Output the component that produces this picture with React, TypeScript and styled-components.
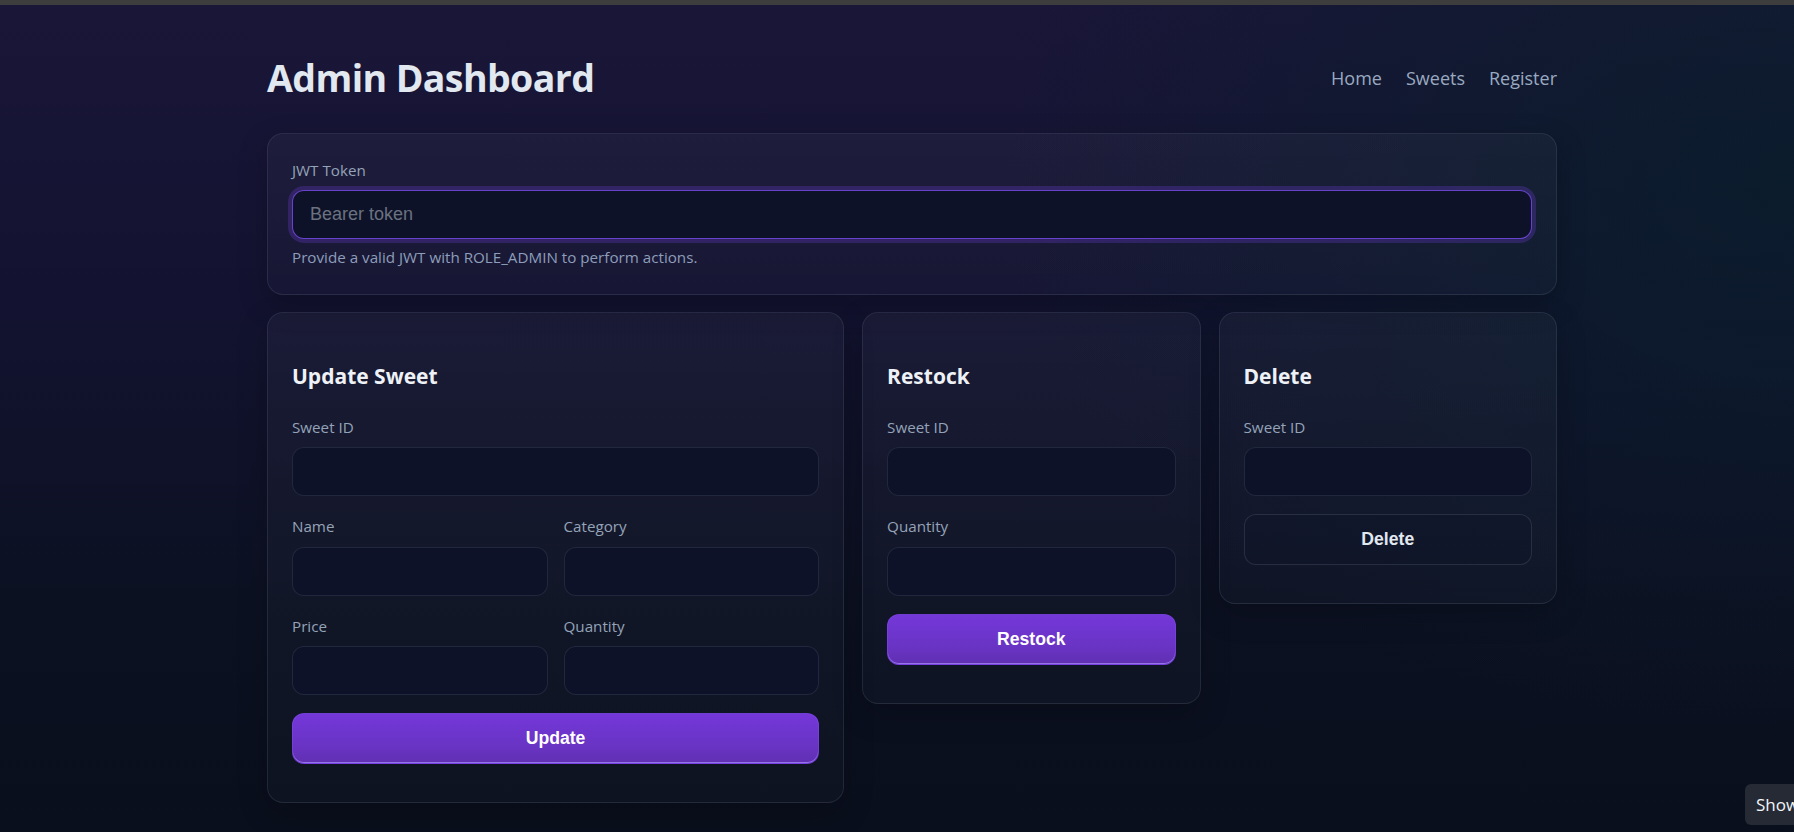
import React from 'react';
import styled, { createGlobalStyle } from 'styled-components';

const GlobalStyle = createGlobalStyle`
    html, body {
        margin: 0;
        padding: 0;
    }
    body {
        min-height: 100vh;
        overflow-x: hidden;
        font-family: "Open Sans", "Noto Sans", sans-serif;
        color: #e2e8f0;
        background:
            radial-gradient(1100px 760px at 100% 22%, rgba(8, 30, 42, 0.78), transparent 72%),
            linear-gradient(180deg, #1a1638 0%, #131331 35%, #0c1122 72%, #0a0f1d 100%);
        background-attachment: fixed;
    }
    * { box-sizing: border-box; }
`;

const TopStrip = styled.div`
    height: 5px;
    background: #3d3d3d;
`;

const Page = styled.div`
    padding: 0 0 24px 30px;
`;

const Container = styled.div`
    max-width: 1290px;
    margin: 0 auto;
    display: flex;
    flex-direction: column;
    gap: 17px;
`;

const Header = styled.header`
    display: flex;
    align-items: center;
    justify-content: space-between;
    padding: 50px 0 15px;
`;

const Title = styled.h1`
    margin: 0;
    font-size: 37.5px;
    line-height: 1.23;
    letter-spacing: -0.6px;
    font-weight: 700;
    color: #e2e8f0;
`;

const Nav = styled.nav`
    display: flex;
    gap: 24px;
    a {
        color: #9aa9c0;
        text-decoration: none;
        font-size: 18px;
        line-height: 1.5;
    }
`;

const Panel = styled.section`
    border: 1px solid rgba(148, 163, 184, 0.14);
    border-radius: 16px;
    padding: 24px;
    background: linear-gradient(180deg, rgba(255, 255, 255, 0.035), rgba(255, 255, 255, 0.018));
    box-shadow: 0 10px 30px rgba(0, 0, 0, 0.22);
`;

const Label = styled.label`
    display: block;
    font-size: 15.2px;
    line-height: 1.6;
    color: #94a3b8;
    margin-bottom: 8px;
`;

const Input = styled.input<{ $active?: boolean }>`
    display: block;
    width: 100%;
    padding: 13px 17px;
    font-family: "Liberation Sans", Arial, sans-serif;
    font-size: 18px;
    color: #e2e8f0;
    caret-color: #cbd5e1;
    background: #0e1228;
    border: 1px solid ${p => p.$active ? 'rgba(118, 76, 230, 0.85)' : 'rgba(148, 163, 184, 0.15)'};
    border-radius: 12px;
    outline: none;
    box-shadow: ${p => p.$active ? '0 0 0 4px rgba(110, 60, 220, 0.28)' : 'none'};
    &::placeholder {
        color: #6b7280;
    }
`;

const Hint = styled.p`
    margin: 6px 0 0;
    font-size: 15.2px;
    line-height: 1.6;
    color: #8d9dba;
`;

const Grid = styled.div`
    display: grid;
    grid-template-columns: 1.705fr 1fr 1fr;
    gap: 18px;
    align-items: start;
`;

const CardTitle = styled.h2`
    margin: 26px 0 25px;
    font-size: 21px;
    line-height: 1.3;
    font-weight: 700;
    color: #eef2f7;
`;

const Form = styled.div`
    display: flex;
    flex-direction: column;
    gap: 18px;
    margin-bottom: 14px;
`;

const Row = styled.div`
    display: grid;
    grid-template-columns: 1fr 1fr;
    gap: 16px;
`;

const Button = styled.button<{ $variant?: 'primary' | 'ghost' }>`
    display: block;
    width: 100%;
    padding: 14px;
    font-family: "Liberation Sans", Arial, sans-serif;
    font-size: 17.6px;
    font-weight: 700;
    border-radius: 12px;
    cursor: pointer;
    color: ${p => p.$variant === 'ghost' ? '#e2e8f0' : '#ffffff'};
    background: ${p => p.$variant === 'ghost'
        ? 'rgba(15, 21, 40, 0.35)'
        : 'linear-gradient(180deg, #7437d9 0%, #6a34c6 60%, #6030b2 100%)'};
    border: 1px solid ${p => p.$variant === 'ghost' ? 'rgba(148, 163, 184, 0.18)' : 'rgba(124, 72, 230, 0.6)'};
    box-shadow: ${p => p.$variant === 'ghost' ? 'none' : 'inset 0 -1px 0 rgba(167, 139, 250, 0.75)'};
`;

const ShowTab = styled.div`
    position: fixed;
    left: 1745px;
    top: 784px;
    height: 41px;
    padding: 0 11px;
    border-radius: 6px 0 0 6px;
    background: #262a35;
    color: #f1f5f9;
    font-size: 17px;
    line-height: 41px;
    white-space: nowrap;
`;

const Field: React.FC<{ label: string }> = ({ label }) => (
    <div>
        <Label>{label}</Label>
        <Input />
    </div>
);

const App: React.FC = () => {
    return <>
        <GlobalStyle />
        <TopStrip />
        <Page>
            <Container>
                <Header>
                    <Title>Admin Dashboard</Title>
                    <Nav>
                        <a href="#">Home</a>
                        <a href="#">Sweets</a>
                        <a href="#">Register</a>
                    </Nav>
                </Header>

                <Panel>
                    <Label>JWT Token</Label>
                    <Input $active autoFocus placeholder="Bearer token" />
                    <Hint>Provide a valid JWT with ROLE_ADMIN to perform actions.</Hint>
                </Panel>

                <Grid>
                    <Panel>
                        <CardTitle>Update Sweet</CardTitle>
                        <Form>
                            <Field label="Sweet ID" />
                            <Row>
                                <Field label="Name" />
                                <Field label="Category" />
                            </Row>
                            <Row>
                                <Field label="Price" />
                                <Field label="Quantity" />
                            </Row>
                            <Button>Update</Button>
                        </Form>
                    </Panel>

                    <Panel>
                        <CardTitle>Restock</CardTitle>
                        <Form>
                            <Field label="Sweet ID" />
                            <Field label="Quantity" />
                            <Button>Restock</Button>
                        </Form>
                    </Panel>

                    <Panel>
                        <CardTitle>Delete</CardTitle>
                        <Form>
                            <Field label="Sweet ID" />
                            <Button $variant="ghost">Delete</Button>
                        </Form>
                    </Panel>
                </Grid>
            </Container>
        </Page>
        <ShowTab>Show</ShowTab>
    </>
}

export default App;
